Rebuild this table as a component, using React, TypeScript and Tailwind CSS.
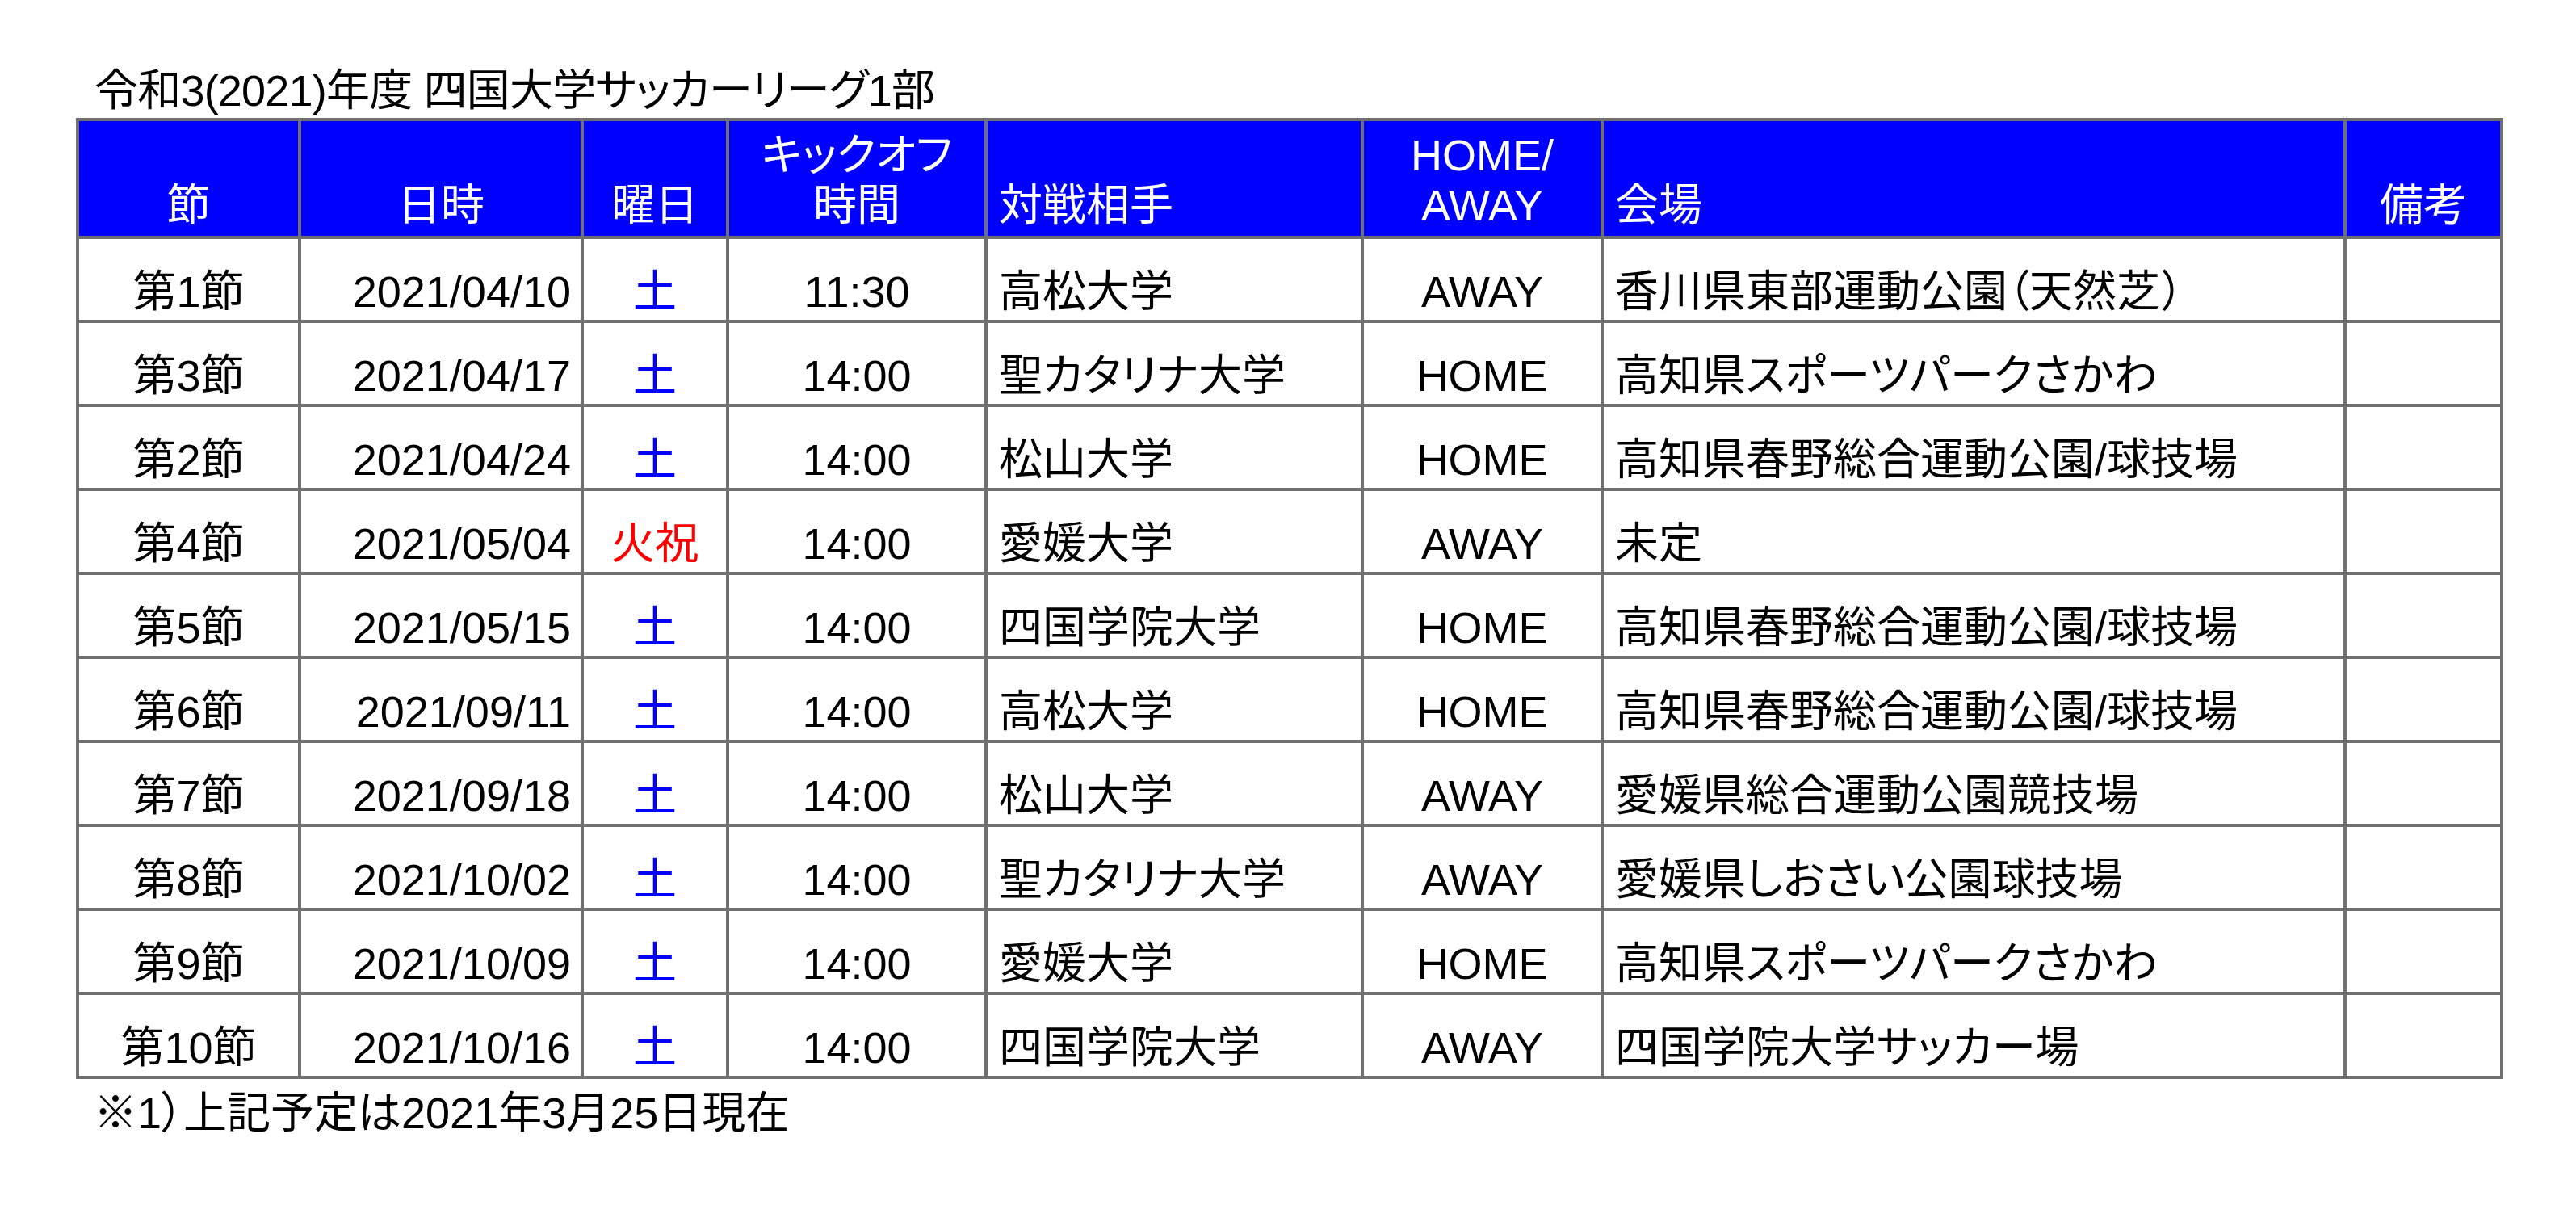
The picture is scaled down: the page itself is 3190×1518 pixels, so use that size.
const matches = [
  { sec: '第1節', date: '2021/04/10', day: '土', time: '11:30', opp: '高松大学', ha: 'AWAY', venue: '香川県東部運動公園（天然芝）' },
  { sec: '第3節', date: '2021/04/17', day: '土', time: '14:00', opp: '聖カタリナ大学', ha: 'HOME', venue: '高知県スポーツパークさかわ' },
  { sec: '第2節', date: '2021/04/24', day: '土', time: '14:00', opp: '松山大学', ha: 'HOME', venue: '高知県春野総合運動公園/球技場' },
  { sec: '第4節', date: '2021/05/04', day: '火祝', time: '14:00', opp: '愛媛大学', ha: 'AWAY', venue: '未定' },
  { sec: '第5節', date: '2021/05/15', day: '土', time: '14:00', opp: '四国学院大学', ha: 'HOME', venue: '高知県春野総合運動公園/球技場' },
  { sec: '第6節', date: '2021/09/11', day: '土', time: '14:00', opp: '高松大学', ha: 'HOME', venue: '高知県春野総合運動公園/球技場' },
  { sec: '第7節', date: '2021/09/18', day: '土', time: '14:00', opp: '松山大学', ha: 'AWAY', venue: '愛媛県総合運動公園競技場' },
  { sec: '第8節', date: '2021/10/02', day: '土', time: '14:00', opp: '聖カタリナ大学', ha: 'AWAY', venue: '愛媛県しおさい公園球技場' },
  { sec: '第9節', date: '2021/10/09', day: '土', time: '14:00', opp: '愛媛大学', ha: 'HOME', venue: '高知県スポーツパークさかわ' },
  { sec: '第10節', date: '2021/10/16', day: '土', time: '14:00', opp: '四国学院大学', ha: 'AWAY', venue: '四国学院大学サッカー場' },
];

// header cells: single line sits on the bottom edge
const head = 'flex items-end bg-[#0000ff] text-white pb-[7px]';
// header cells with two stacked lines
const head2 = 'flex flex-col items-center justify-end bg-[#0000ff] text-white pb-[7px] text-center';
const cell = 'flex items-end bg-white pb-[4px] whitespace-nowrap';

export default function App() {
  return (
    <div className="min-h-screen w-[3190px] bg-white pl-[94px] font-['Liberation_Sans','Noto_Sans_CJK_JP',sans-serif] text-[54px] leading-[62px] text-black">
      <div className="pl-[23px] pt-[81px] tracking-[-0.8px] [font-feature-settings:'palt']">令和3(2021)年度 四国大学サッカーリーグ1部</div>

      {/* schedule table */}
      <div className="mt-[3px] grid w-[3006px] grid-cols-[271px_346px_176px_316px_462px_293px_916px_190px] grid-rows-[142px_repeat(10,100px)] gap-[4px] bg-[#707070] p-[4px]">
        <div className={`${head} justify-center`}>節</div>
        <div className={`${head} justify-center`}>日時</div>
        <div className={`${head} justify-center`}>曜日</div>
        <div className={`${head2} [font-feature-settings:'palt']`}>
          <span>キックオフ</span>
          <span>時間</span>
        </div>
        <div className={`${head} pl-[14px]`}>対戦相手</div>
        <div className={head2}>
          <span>HOME/</span>
          <span>AWAY</span>
        </div>
        <div className={`${head} pl-[14px]`}>会場</div>
        <div className={`${head} justify-center`}>備考</div>

        {matches.map((m) => (
          <div key={m.sec} className="contents">
            <div className={`${cell} justify-center`}>{m.sec}</div>
            <div className={`${cell} justify-end pr-[12px]`}>{m.date}</div>
            <div className={`${cell} justify-center ${m.day === '土' ? 'text-[#0000ff]' : 'text-[#ff0000]'}`}>{m.day}</div>
            <div className={`${cell} justify-center`}>{m.time}</div>
            <div className={`${cell} pl-[14px] [font-feature-settings:'palt']`}>{m.opp}</div>
            <div className={`${cell} justify-center`}>{m.ha}</div>
            <div className={`${cell} pl-[14px]`}>
              <span className="[font-feature-settings:'palt']">{m.venue.replace('（天然芝）', '')}</span>
              {m.venue.includes('（') && (
                <>
                  <span className="[font-feature-settings:'palt']">（</span>
                  <span>天然芝）</span>
                </>
              )}
            </div>
            <div className={cell}></div>
          </div>
        ))}
      </div>

      <div className="mt-[11px] pl-[22px] [font-feature-settings:'palt']">※1）上記予定は2021年3月25日現在</div>
    </div>
  );
}
